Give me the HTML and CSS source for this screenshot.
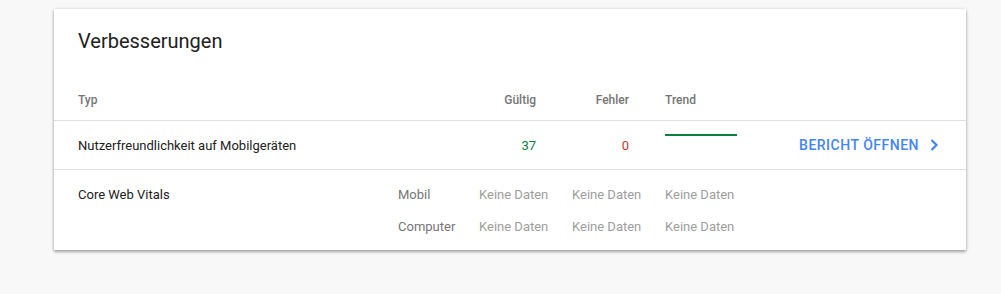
FILE: index.html
```html
<!DOCTYPE html>
<html lang="de">
  <head>
    <meta charset="UTF-8" />
    <title>Verbesserungen</title>
    <link rel="stylesheet" href="styles.css">
  </head>
  <body>
    <div class="card">
      <h2 class="card-title">Verbesserungen</h2>

      <div class="row head">
        <div class="cell type">Typ</div>
        <div class="cell sub"></div>
        <div class="cell num">Gültig</div>
        <div class="cell num">Fehler</div>
        <div class="cell trend">Trend</div>
        <div class="cell action"></div>
      </div>

      <div class="row item">
        <div class="cell type">Nutzerfreundlichkeit auf Mobilgeräten</div>
        <div class="cell sub"></div>
        <div class="cell num valid">37</div>
        <div class="cell num error">0</div>
        <div class="cell trend"><span class="trend-line"></span></div>
        <div class="cell action">
          <a class="open-btn" href="#">BERICHT ÖFFNEN
            <svg width="10" height="14" viewBox="0 0 10 14"><path d="M2.5 2 L7.5 7 L2.5 12" fill="none" stroke="#4285f4" stroke-width="2.2"/></svg>
          </a>
        </div>
      </div>

      <div class="group">
        <div class="row sub-row">
          <div class="cell type">Core Web Vitals</div>
          <div class="cell sub">Mobil</div>
          <div class="cell nodata">Keine Daten</div>
          <div class="cell nodata">Keine Daten</div>
          <div class="cell nodata">Keine Daten</div>
          <div class="cell action"></div>
        </div>
        <div class="row sub-row">
          <div class="cell type"></div>
          <div class="cell sub">Computer</div>
          <div class="cell nodata">Keine Daten</div>
          <div class="cell nodata">Keine Daten</div>
          <div class="cell nodata">Keine Daten</div>
          <div class="cell action"></div>
        </div>
      </div>
    </div>
  </body>
</html>
```

FILE: styles.css
```css
body {
  font-family: Roboto, "Liberation Sans", sans-serif;
  margin: 0;
  padding: 9px 0 44px 54px;
  background: #f8f8f8;
  color: #212121;
}
.card {
  width: 912px;
  background: white;
  box-shadow: 0 0 3px rgba(0, 0, 0, 0.12), 0 2px 3px rgba(0, 0, 0, 0.32);
}
.card-title {
  margin: 0;
  padding: 18px 24px 25px;
  font-size: 20px;
  font-weight: 400;
  line-height: 28px;
  color: #212121;
}
.row {
  display: grid;
  grid-template-columns: 320px 81px 93px 93px 93px 1fr;
  padding: 0 24px;
  align-items: center;
}
.cell {
  font-size: 13px;
  line-height: 32px;
}
.head {
  height: 40px;
  border-bottom: 1px solid #e0e0e0;
}
.head .cell {
  font-size: 12px;
  font-weight: 500;
  color: #757575;
}
.item {
  height: 48px;
  border-bottom: 1px solid #e0e0e0;
}
.item .cell,
.sub-row .cell {
  padding-top: 1px;
}
.num {
  text-align: right;
  padding-right: 36px;
}
.valid {
  color: #0b8043;
}
.error {
  color: #c53929;
}
.trend-line {
  display: block;
  width: 72px;
  height: 2px;
  background: #0b8043;
  margin-top: -12px;
}
.action {
  text-align: right;
  padding-right: 3px;
}
.open-btn {
  display: inline-flex;
  align-items: center;
  gap: 10px;
  color: #4285f4;
  font-size: 14px;
  font-weight: 500;
  letter-spacing: 0.5px;
  text-decoration: none;
}
.group {
  padding: 8px 0;
}
.sub-row {
  height: 32px;
}
.sub {
  color: #757575;
}
.nodata {
  color: #9e9e9e;
}
```
